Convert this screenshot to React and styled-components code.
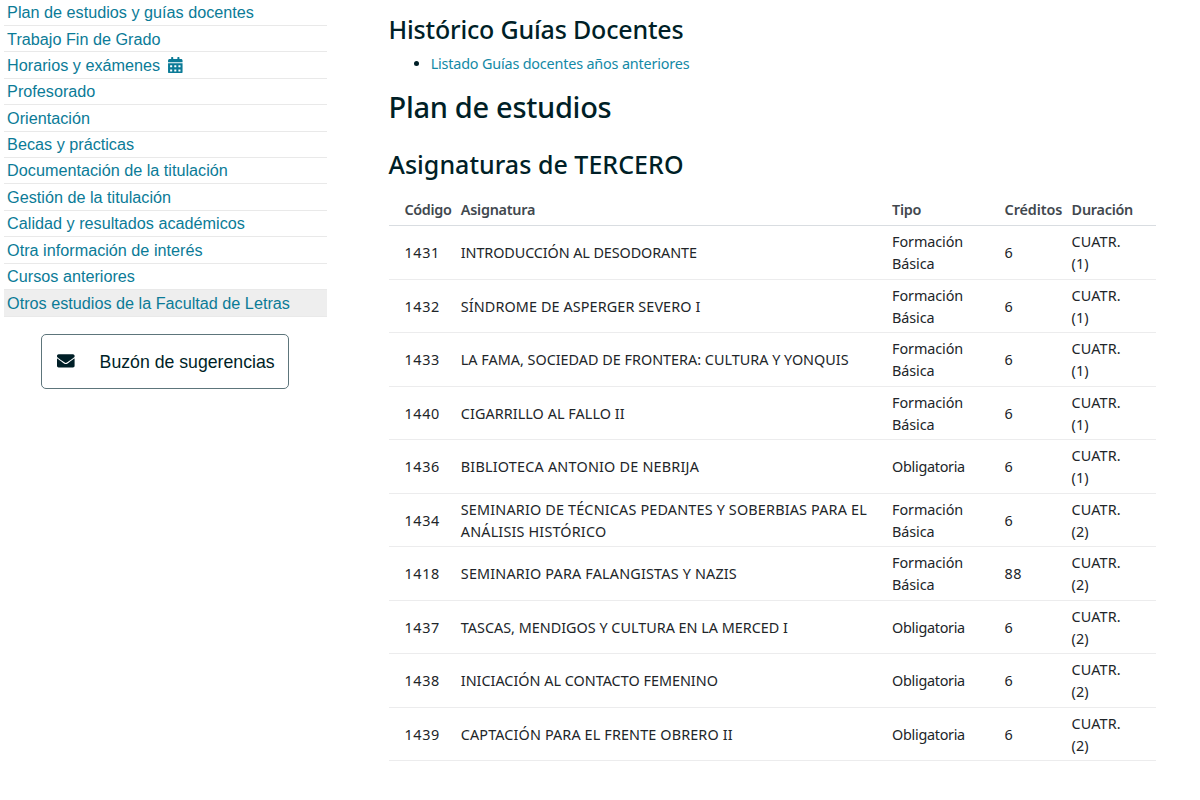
import React from 'react';
import styled, { createGlobalStyle } from 'styled-components';
import { FaCalendarAlt, FaEnvelope } from 'react-icons/fa';

const menu = [
  { label: 'Plan de estudios y guías docentes' },
  { label: 'Trabajo Fin de Grado' },
  { label: 'Horarios y exámenes', calendar: true },
  { label: 'Profesorado' },
  { label: 'Orientación' },
  { label: 'Becas y prácticas' },
  { label: 'Documentación de la titulación' },
  { label: 'Gestión de la titulación' },
  { label: 'Calidad y resultados académicos' },
  { label: 'Otra información de interés' },
  { label: 'Cursos anteriores' },
  { label: 'Otros estudios de la Facultad de Letras', active: true },
];

const BASICA = 'Formación Básica';
const OBLIGATORIA = 'Obligatoria';

// track: letter spacing of the subject name, in px
const subjects = [
  { code: '1431', name: 'INTRODUCCIÓN AL DESODORANTE', track: -0.1, type: BASICA, credits: 6, term: 1 },
  { code: '1432', name: 'SÍNDROME DE ASPERGER SEVERO I', track: 0.1, type: BASICA, credits: 6, term: 1 },
  { code: '1433', name: 'LA FAMA, SOCIEDAD DE FRONTERA: CULTURA Y YONQUIS', track: 0, type: BASICA, credits: 6, term: 1 },
  { code: '1440', name: 'CIGARRILLO AL FALLO II', track: 0.06, type: BASICA, credits: 6, term: 1 },
  { code: '1436', name: 'BIBLIOTECA ANTONIO DE NEBRIJA', track: 0.21, type: OBLIGATORIA, credits: 6, term: 1 },
  { code: '1434', name: 'SEMINARIO DE TÉCNICAS PEDANTES Y SOBERBIAS PARA EL ANÁLISIS HISTÓRICO', track: 0.17, type: BASICA, credits: 6, term: 2 },
  { code: '1418', name: 'SEMINARIO PARA FALANGISTAS Y NAZIS', track: 0.18, type: BASICA, credits: 88, term: 2 },
  { code: '1437', name: 'TASCAS, MENDIGOS Y CULTURA EN LA MERCED I', track: 0, type: OBLIGATORIA, credits: 6, term: 2 },
  { code: '1438', name: 'INICIACIÓN AL CONTACTO FEMENINO', track: 0, type: OBLIGATORIA, credits: 6, term: 2 },
  { code: '1439', name: 'CAPTACIÓN PARA EL FRENTE OBRERO II', track: 0.13, type: OBLIGATORIA, credits: 6, term: 2 },
];

const App = () => (
  <>
    <GlobalStyle />
    <Page>
      <Sidebar>
        <Menu>
          {menu.map(({ label, calendar, active }) => (
            <MenuItem key={label} $active={active}>
              <MenuLink href="#">{label}</MenuLink>
              {calendar && <CalendarIcon />}
            </MenuItem>
          ))}
        </Menu>
        <SuggestionButton>
          <EnvelopeIcon />
          <ButtonLabel>Buzón de sugerencias</ButtonLabel>
        </SuggestionButton>
      </Sidebar>

      <Content>
        <SectionTitle $track={-0.18}>Histórico Guías Docentes</SectionTitle>
        <HistoryList>
          <li>
            <HistoryLink href="#">Listado Guías docentes años anteriores</HistoryLink>
          </li>
        </HistoryList>
        <PlanTitle>Plan de estudios</PlanTitle>
        <SectionTitle $track={0.03}>Asignaturas de TERCERO</SectionTitle>

        <Table role="table">
          <HeadRow role="row">
            <HeadCell $track={-0.35}>Código</HeadCell>
            <HeadCell>Asignatura</HeadCell>
            <HeadCell>Tipo</HeadCell>
            <HeadCell $track={-0.1}>Créditos</HeadCell>
            <HeadCell>Duración</HeadCell>
          </HeadRow>
          {subjects.map(({ code, name, track, type, credits, term }) => (
            <Row key={code} role="row">
              <Cell $track={0.64}>{code}</Cell>
              <Cell $track={track}>{name}</Cell>
              <TypeCell $track={type === OBLIGATORIA ? -0.3 : -0.1}>{type}</TypeCell>
              <Cell $track={0.3}>{credits}</Cell>
              <TermCell $track={0.1}>{`CUATR. (${term})`}</TermCell>
            </Row>
          ))}
        </Table>
      </Content>
    </Page>
  </>
);

export default App;

const GlobalStyle = createGlobalStyle`
  * {
    box-sizing: border-box;
  }
  body {
    margin: 0;
    background-color: #fff;
    overflow: hidden;
  }
`;

const Page = styled.div`
  display: flex;
  height: 800px;
`;

const Sidebar = styled.aside`
  width: 327px;
  padding-left: 4px;
  font-family: 'Liberation Sans', Arial, sans-serif;
`;

const Menu = styled.ul`
  margin: 0;
  padding: 0;
  list-style: none;
`;

const MenuItem = styled.li`
  display: flex;
  align-items: center;
  height: 26.4px;
  padding: 0.7px 0 0 3.1px;
  border-bottom: 1px solid #e9e9e9;
  background-color: ${({ $active }) => ($active ? '#eee' : 'transparent')};
  &:first-child {
    height: 26px;
    padding-top: 0;
  }
  &:last-child {
    height: 27.4px;
    padding-top: 1px;
  }
`;

const MenuLink = styled.a`
  color: #0b7b97;
  font-size: 16.22px;
  text-decoration: none;
`;

const CalendarIcon = styled(FaCalendarAlt)`
  width: 14.6px;
  height: 16.6px;
  margin: 0 0 1px 8px;
  color: #0b7b97;
`;

const SuggestionButton = styled.button`
  display: flex;
  align-items: center;
  gap: 25px;
  width: 248px;
  height: 55px;
  margin: 16.6px 0 0 37.4px;
  padding: 0 0 0 14.6px;
  border: 1px solid #5d757b;
  border-radius: 5px;
  background-color: #fff;
  color: #001f27;
  font-family: inherit;
  font-size: 17.7px;
  white-space: nowrap;
`;

const EnvelopeIcon = styled(FaEnvelope)`
  width: 17.6px;
  height: 17.6px;
  margin-bottom: 1px;
`;

const ButtonLabel = styled.span`
  padding-top: 2px;
`;

const Content = styled.main`
  width: 767px;
  margin-left: 61.5px;
  padding-top: 14px;
  color: #001f27;
  font-family: 'Noto Sans', sans-serif;
`;

const SectionTitle = styled.h2`
  margin: 0;
  font-size: 25px;
  font-weight: 500;
  line-height: 30px;
  letter-spacing: ${({ $track = 0 }) => $track}px;
`;

const PlanTitle = styled.h1`
  margin: 14px 0 24px;
  font-size: 29px;
  font-weight: 500;
  line-height: 36px;
  letter-spacing: -0.3px;
`;

const HistoryList = styled.ul`
  margin: 9px 0 0;
  padding-left: 42.2px;
  font-size: 14.4px;
  line-height: 22px;
`;

const HistoryLink = styled.a`
  color: #1389a6;
  letter-spacing: -0.18px;
  text-decoration: none;
`;

const Table = styled.div`
  margin-top: 14px;
  color: #212529;
  font-size: 14.4px;
  line-height: 22px;
`;

const Row = styled.div`
  display: grid;
  grid-template-columns: 56.3px 431.3px 112.5px 67px 1fr;
  align-items: center;
  height: 53.5px;
  padding: 1px 0 0 16px;
  border-bottom: 1px solid #ececed;
`;

const HeadRow = styled(Row)`
  height: 33.4px;
  padding-top: 1.6px;
  border-bottom: 1px solid #d9dde1;
`;

const Cell = styled.div`
  letter-spacing: ${({ $track = 0 }) => $track}px;
  padding-right: 20px;
`;

const HeadCell = styled.div`
  color: #41484e;
  font-weight: 600;
  letter-spacing: ${({ $track = -0.25 }) => $track}px;
`;

const TypeCell = styled(Cell)`
  width: 95px;
`;

const TermCell = styled(Cell)`
  width: 75px;
`;
